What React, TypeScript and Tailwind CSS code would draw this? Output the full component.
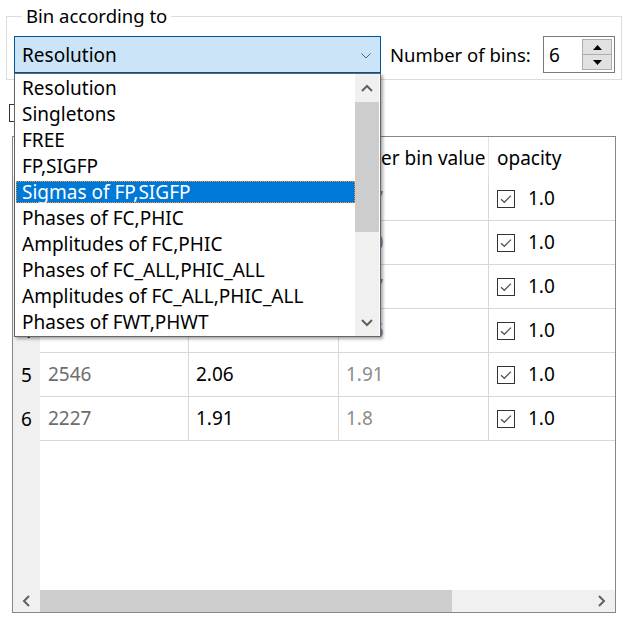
import React from "react";

const items = [
  "Resolution",
  "Singletons",
  "FREE",
  "FP,SIGFP",
  "Sigmas of FP,SIGFP",
  "Phases of FC,PHIC",
  "Amplitudes of FC,PHIC",
  "Phases of FC_ALL,PHIC_ALL",
  "Amplitudes of FC_ALL,PHIC_ALL",
  "Phases of FWT,PHWT",
];

const rows = [
  { n: 1, count: "2394", upper: "50.27", lower: "2.77" },
  { n: 2, count: "2473", upper: "2.77", lower: "2.40" },
  { n: 3, count: "2499", upper: "2.40", lower: "2.27" },
  { n: 4, count: "2512", upper: "2.27", lower: "2.06" },
  { n: 5, count: "2546", upper: "2.06", lower: "1.91" },
  { n: 6, count: "2227", upper: "1.91", lower: "1.8" },
];

function CheckBox() {
  return (
    <svg width="18" height="18" viewBox="0 0 18 18" className="shrink-0">
      <rect x="0.5" y="0.5" width="17" height="17" fill="white" stroke="#333333" />
      <path d="M4 9.2 L7.3 12.3 L14 5.6" fill="none" stroke="#555555" strokeWidth="1.3" />
    </svg>
  );
}

function Chevron({ dir, color = "#606060" }: { dir: "up" | "down" | "left" | "right"; color?: string }) {
  const d = {
    up: "M1 7 L6 2 L11 7",
    down: "M1 2 L6 7 L11 2",
    left: "M7 1 L2 6 L7 11",
    right: "M2 1 L7 6 L2 11",
  }[dir];
  const vertical = dir === "up" || dir === "down";
  return (
    <svg width={vertical ? 12 : 9} height={vertical ? 9 : 12} viewBox={vertical ? "0 0 12 9" : "0 0 9 12"}>
      <path d={d} fill="none" stroke={color} strokeWidth="2" />
    </svg>
  );
}

function Popup() {
  return (
    <div className="absolute left-0 top-full z-10 flex h-[264px] w-[367px] border border-[#646464] bg-white pr-px shadow-[2px_2px_3px_rgba(0,0,0,0.35)]">
      <div className="flex w-[340px] flex-col pt-px">
        {items.map((it) => (
          <div key={it} className="h-[26px] py-[2px] pl-px">
            {it === "Sigmas of FP,SIGFP" ? (
              <div className="flex h-[22px] items-center border border-dotted border-[#f7941d] bg-[#0078d7] pl-[5px] text-white">
                {it}
              </div>
            ) : (
              <div className="flex h-[22px] items-center pl-[6px]">{it}</div>
            )}
          </div>
        ))}
      </div>
      <div className="flex w-[24px] flex-col bg-[#f0f0f0]">
        <div className="flex h-[28px] items-center justify-center">
          <Chevron dir="up" />
        </div>
        <div className="h-[130px] bg-[#cdcdcd]" />
        <div className="flex-1" />
        <div className="flex h-[28px] items-center justify-center">
          <Chevron dir="down" />
        </div>
      </div>
    </div>
  );
}

export default function App() {
  return (
    <div className="h-[624px] w-[629px] overflow-hidden bg-white font-['Noto_Sans',sans-serif] text-[19px] leading-none text-black">
      <fieldset className="ml-[6px] mr-[7px] mt-[4px] border border-[#dcdcdc] pb-[6px] pl-[7px] pr-[6px] pt-[8px]">
        <legend className="ml-[8px] px-[4px] text-[18.5px] leading-[24px]">Bin according to</legend>
        <div className="flex items-center">
          <div className="relative">
            <div className="flex h-[37px] w-[367px] items-center justify-between border border-[#005499] bg-[#cce4f7] pl-[7px] pr-[9px] pt-[2px]">
              <span>Resolution</span>
              <svg width="10" height="6" viewBox="0 0 10 6">
                <path d="M0.5 0.5 L5 5 L9.5 0.5" fill="none" stroke="#606060" strokeWidth="1" />
              </svg>
            </div>
            <Popup />
          </div>
          <span className="ml-[9px] pt-[2px] text-[18.5px]">Number of bins:</span>
          <div className="ml-auto flex h-[37px] w-[72px] items-center border border-[#7a7a7a] bg-white pl-[5px] pr-[2px]">
            <span className="flex-1 pt-[2px]">6</span>
            <div className="flex h-[31px] w-[30px] flex-col border border-[#adadad]">
              <div className="flex flex-1 items-center justify-center border-b border-[#adadad] bg-[#e1e1e1]">
                <svg width="9" height="5" viewBox="0 0 9 5">
                  <path d="M0 5 L4.5 0 L9 5 Z" fill="#000" />
                </svg>
              </div>
              <div className="flex flex-1 items-center justify-center bg-[#e1e1e1]">
                <svg width="9" height="5" viewBox="0 0 9 5">
                  <path d="M0 0 L4.5 5 L9 0 Z" fill="#000" />
                </svg>
              </div>
            </div>
          </div>
        </div>
      </fieldset>

      <div className="ml-[9px] mt-[24px] flex h-[18px] items-center gap-[6px]">
        <div className="h-[18px] w-[18px] border border-[#333333] bg-white" />
        <span>Show all bins</span>
      </div>

      <div className="ml-[12px] mt-[14px] flex h-[477px] w-[604px] flex-col border border-[#828790] bg-white">
        <div className="flex h-[40px] shrink-0">
          <div className="w-[27px]" />
          <div className="flex w-[149px] items-center border-r border-[#e5e5e5] pl-[8px] pt-[3px]"># HKLs</div>
          <div className="flex w-[150px] items-center border-r border-[#e5e5e5] pl-[7px] pt-[3px]">lower bin value</div>
          <div className="flex w-[150px] items-center border-r border-[#e5e5e5] pl-[7px] pt-[3px]">upper bin value</div>
          <div className="flex flex-1 items-center pl-[8px] pt-[3px]">opacity</div>
        </div>
        {rows.map((r) => (
          <div key={r.n} className="flex h-[44px] shrink-0">
            <div className="flex w-[27px] items-center justify-center bg-[#f0f0f0]">{r.n}</div>
            <div className="flex w-[149px] items-center border-b border-r border-[#d8d8d8] pl-[8px] text-[#6d6d6d]">{r.count}</div>
            <div className="flex w-[150px] items-center border-b border-r border-[#d8d8d8] pl-[7px]">{r.upper}</div>
            <div className="flex w-[150px] items-center border-b border-r border-[#d8d8d8] pl-[7px] text-[#8c8c8c]">{r.lower}</div>
            <div className="flex flex-1 items-center gap-[13px] border-b border-[#d8d8d8] pl-[8px]">
              <CheckBox />
              <span>1.0</span>
            </div>
          </div>
        ))}
        <div className="flex flex-1">
          <div className="w-[27px] bg-[#f0f0f0]" />
        </div>
        <div className="flex h-[22px] shrink-0 bg-[#f0f0f0]">
          <div className="flex w-[27px] items-center justify-center">
            <Chevron dir="left" />
          </div>
          <div className="w-[412px] bg-[#cdcdcd]" />
          <div className="flex-1" />
          <div className="flex w-[27px] items-center justify-center">
            <Chevron dir="right" />
          </div>
        </div>
      </div>
    </div>
  );
}
